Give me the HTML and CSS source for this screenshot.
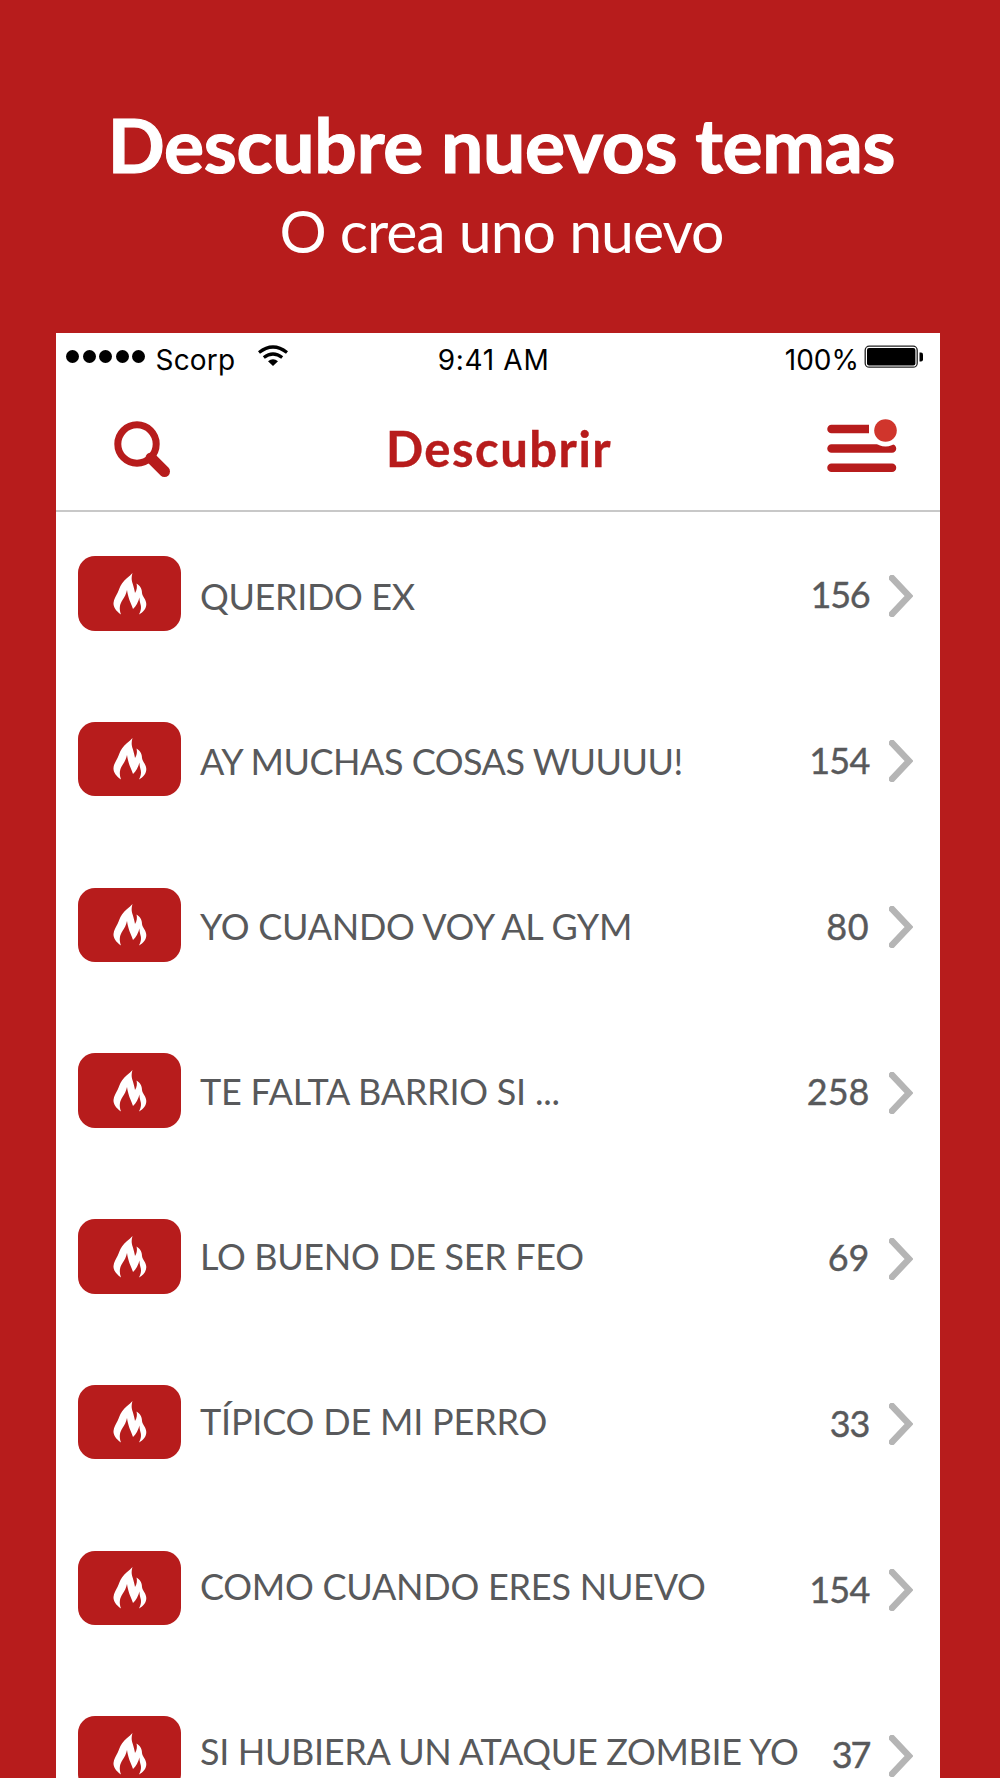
FILE: index.html
```html
<!DOCTYPE html>
<html lang="es">
<head>
<meta charset="utf-8">
<title>Descubrir</title>
<link rel="stylesheet" href="styles.css">
</head>
<body>
<svg width="0" height="0" class="defs" aria-hidden="true">
  <symbol id="flame" viewBox="0 0 34 42"><path d="M8 41.500C3 38 .3 34 .5 30C.8 26 3 23 4.500 20C6 17 6.500 14 9 10.500C12 6 16 4 19.500 0C18 5 18.800 8 19.800 11C20.500 13.500 21.500 16.500 22 20C24 17 24.300 13.500 23.500 10.500C27.500 13 29 16 29 20C29.500 24 33.300 26.500 33.300 31C33.300 35.500 30.500 39 26 41.500C28.500 37 28.300 33.500 27.300 30.500C26.800 28.500 26.500 27 26.500 24.500C25.300 29 23 33.500 20 36C18.500 31.500 16.500 28 15.500 24C14.800 21.500 14.300 19.500 14 17C13.200 21 11.500 24 9.500 27C6.500 31.500 6 36 8 41.500Z"/></symbol>
  <symbol id="chevron" viewBox="0 0 24 42"><path d="M3 3L20 21L3 39"/></symbol>
</svg>
<header class="promo"><h1>Descubre nuevos temas</h1><p>O crea uno nuevo</p></header>
<main class="phone">
  <div class="status">
    <div class="carrier"><i></i><i></i><i></i><i></i><i></i><span>Scorp</span>
      <svg class="wifi" width="32" height="22" viewBox="0 0 32 22"><g fill="none" stroke="#000" stroke-width="3.200"><path d="M2 7.500Q16-3.500 30 7.500"/><path d="M6.800 12.500Q16 5.500 25.200 12.500"/></g><path d="M11 16.200Q16 12.500 21 16.200L16 21Z"/></svg></div>
    <span class="time">9:41 AM</span>
    <div class="power"><span>100%</span><svg width="60" height="24" viewBox="0 0 60 24"><rect x="1.200" y="1.200" width="52" height="21" rx="4" fill="none" stroke="#222" stroke-width="1.300"/><rect x="3" y="3" width="48.400" height="17.400" rx="2"/><path d="M55.500 7.500h1.500q2 0 2 2v5q0 2-2 2h-1.500z"/></svg></div>
  </div>
  <nav class="bar">
    <svg width="58" height="58" viewBox="0 0 58 58" fill="none" stroke="#b71c1c"><circle cx="24" cy="24" r="19.200" stroke-width="7"/><path d="M38 38L51.500 51.500" stroke-width="11" stroke-linecap="round"/></svg>
    <h2>Descubrir</h2>
    <svg class="menu" width="70" height="54" viewBox="0 0 70 54"><path d="M4.500 10H64.500M4.500 29.500H65M4.500 48.800H65" stroke="#b71c1c" stroke-width="8.500" stroke-linecap="round"/><path fill="#fff" d="M42 3H70v13H42z"/><circle cx="58.500" cy="11.500" r="16" fill="#fff"/><circle cx="58.500" cy="11.500" r="11.300" fill="#d0352c"/></svg>
  </nav>
  <ul class="topics">
    <li><b><svg><use href="#flame"/></svg></b><span class="title">QUERIDO EX</span><span class="count">156</span><svg class="go"><use href="#chevron"/></svg></li>
    <li><b><svg><use href="#flame"/></svg></b><span class="title">AY MUCHAS COSAS WUUUU!</span><span class="count">154</span><svg class="go"><use href="#chevron"/></svg></li>
    <li><b><svg><use href="#flame"/></svg></b><span class="title">YO CUANDO VOY AL GYM</span><span class="count">80</span><svg class="go"><use href="#chevron"/></svg></li>
    <li><b><svg><use href="#flame"/></svg></b><span class="title">TE FALTA BARRIO SI ...</span><span class="count">258</span><svg class="go"><use href="#chevron"/></svg></li>
    <li><b><svg><use href="#flame"/></svg></b><span class="title">LO BUENO DE SER FEO</span><span class="count">69</span><svg class="go"><use href="#chevron"/></svg></li>
    <li><b><svg><use href="#flame"/></svg></b><span class="title">TÍPICO DE MI PERRO</span><span class="count">33</span><svg class="go"><use href="#chevron"/></svg></li>
    <li><b><svg><use href="#flame"/></svg></b><span class="title">COMO CUANDO ERES NUEVO</span><span class="count">154</span><svg class="go"><use href="#chevron"/></svg></li>
    <li><b><svg><use href="#flame"/></svg></b><span class="title">SI HUBIERA UN ATAQUE ZOMBIE YO</span><span class="count">37</span><svg class="go"><use href="#chevron"/></svg></li>
  </ul>
</main>
</body>
</html>
```
FILE: styles.css
```css
* { box-sizing: border-box; }
body { margin: 0; height: 1778px; overflow: hidden; position: relative; background: #b71c1c; font-family: Lato, sans-serif; }
h1, h2, p, ul { margin: 0; padding: 0; font-weight: 400; }
.defs { position: absolute; }
.promo { height: 333px; padding-top: 100px; color: #fff; text-align: center; white-space: nowrap; }
.promo h1 { font-size: 75px; line-height: 89px; font-weight: 700; letter-spacing: -.3px; padding-left: 3px; -webkit-text-stroke: 1.2px #fff; }
.promo p { font-size: 59px; line-height: 84px; letter-spacing: -1px; padding-left: 3px; }
.phone { width: 884px; height: 1445px; margin-left: 56px; background: #fff; overflow: hidden; }
.status { display: grid; grid-template-columns: 1fr auto 1fr; height: 54px; padding: 0 16px 0 10px; font: 28px/54px Inter, sans-serif; white-space: nowrap; }
.carrier, .power { display: flex; }
.carrier i { width: 13px; height: 13px; margin: 17px 3.5px 0 0; border-radius: 50%; background: #000; }
.carrier span { margin-left: 7px; letter-spacing: .2px; }
.wifi { margin: 12px 0 0 22px; }
.time { letter-spacing: .7px; margin-right: 3px; }
.power { justify-content: flex-end; }
.power svg { margin: 12px 0 0 5px; }
.bar { display: flex; height: 125px; justify-content: space-between; align-items: flex-start; padding: 31px 43px 0 57px; border-bottom: 2px solid #c8c8c8; color: #b71c1c; }
.bar > svg { margin-top: 1.500px; }
.bar h2 { font-size: 49px; line-height: 60px; font-weight: 700; letter-spacing: 1.5px; -webkit-text-stroke: .4px #b71c1c; }
.bar .menu { margin-top: 1px; }
.topics { list-style: none; padding-top: 44px; color: #58595b; font-size: 36px; }
.topics li { display: flex; height: 165.750px; padding-left: 22px; align-items: flex-start; white-space: nowrap; }
.topics b { width: 102.500px; height: 74.500px; border-radius: 17px; background: #b71c1c; padding: 16.500px 34.500px; }
.topics b svg { display: block; width: 34px; height: 42px; fill: #fff; }
.title { margin-left: 19.500px; line-height: 81px; }
.count { margin-left: auto; line-height: 76px; -webkit-text-stroke: .4px #58595b; }
.go { width: 24px; height: 42px; margin: 18.500px 27.500px 0 19px; fill: none; stroke: #b5b5b5; stroke-width: 6.5; stroke-linecap: round; }

/* Optical spacing of each topic; titles sit slightly tighter than the row pitch */
li:nth-child(1) .title { letter-spacing: -.35px; }
li:nth-child(2) .title { letter-spacing: -.5px; margin-top: -.750px; }
li:nth-child(3) .title { letter-spacing: -.28px; margin-top: -1.500px; }
li:nth-child(4) .title { letter-spacing: -.24px; margin-top: -2.200px; }
li:nth-child(5) .title { letter-spacing: -.35px; margin-top: -3px; }
li:nth-child(6) .title { letter-spacing: -.2px; margin-top: -3.700px; }
li:nth-child(7) .title { letter-spacing: -.25px; margin-top: -4.500px; }
li:nth-child(8) .title { letter-spacing: -.34px; margin-top: -5.200px; }
li:nth-child(1) .count { letter-spacing: -1.2px; }
li:nth-child(2) .count, li:nth-child(7) .count { letter-spacing: -.8px; }
li:nth-child(3) .count { letter-spacing: .8px; }
li:nth-child(6) .count { letter-spacing: -1px; }
li:nth-child(8) .count { letter-spacing: -2px; }
```
